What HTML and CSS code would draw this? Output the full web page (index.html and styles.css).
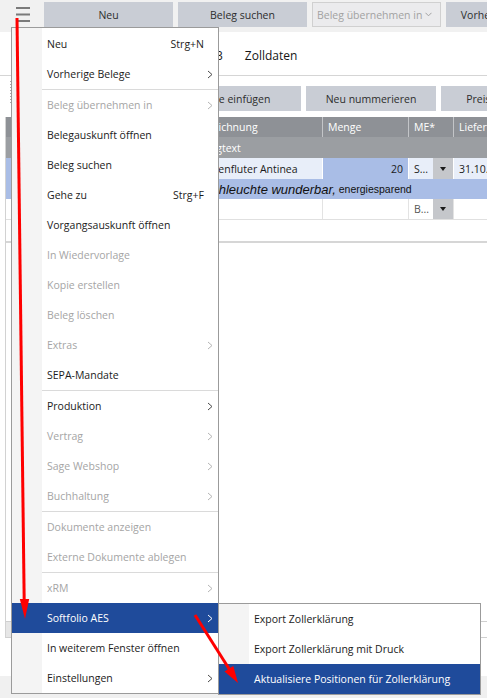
FILE: index.html
```html
<!DOCTYPE html>
<html lang="de">
<head>
  <meta charset="UTF-8" />
  <meta name="viewport" content="width=device-width, initial-scale=1.0"/>
  <title>Beleg – Zolldaten</title>
  <link rel="stylesheet" href="styles.css">
</head>
<body>
  <div class="toolbar">
    <div class="burger">
      <svg width="14" height="16" viewBox="0 0 14 16">
        <rect y="0" width="14" height="2"/>
        <rect y="6.5" width="14" height="2"/>
        <rect y="13" width="14" height="2"/>
      </svg>
    </div>
    <button class="tb-btn">Neu</button>
    <button class="tb-btn">Beleg suchen</button>
    <button class="tb-btn off">Beleg übernehmen in
      <svg width="7" height="5" viewBox="0 0 7 5"><path d="M0.5 0.8L3.5 3.8L6.5 0.8" fill="none" stroke="currentColor"/></svg>
    </button>
    <button class="tb-btn wide">Vorherige Belege</button>
  </div>

  <div class="tabs">
    <span>Belegkopf</span>
    <span>Positionen 3</span>
    <span>Zolldaten</span>
  </div>

  <div class="actions">
    <span class="grip"></span>
    <button class="act-btn">Artikel suchen</button>
    <button class="act-btn">Zeile einfügen</button>
    <button class="act-btn">Neu nummerieren</button>
    <button class="act-btn">Preise anpassen</button>
  </div>

  <div class="doc">
    <div class="row head">
      <div class="cell">Pos</div>
      <div class="cell">Artikel</div>
      <div class="cell">Bezeichnung</div>
      <div class="cell">Menge</div>
      <div class="cell">ME*</div>
      <div class="cell">Liefertermin</div>
    </div>
    <div class="row group">
      <div class="cell"></div>
      <div class="cell"></div>
      <div class="cell span">Belegtext</div>
    </div>
    <div class="row sel">
      <div class="cell mark">1</div>
      <div class="cell">4711</div>
      <div class="cell">Lichtenfluter Antinea</div>
      <div class="cell qty">20</div>
      <div class="cell">S...<span class="dd"></span></div>
      <div class="cell">31.10.2024</div>
    </div>
    <div class="row note">
      <div class="cell"></div>
      <div class="cell"></div>
      <div class="cell span"><em>Tischleuchte wunderbar,</em>&nbsp;energiesparend</div>
    </div>
    <div class="row blank">
      <div class="cell"></div>
      <div class="cell"></div>
      <div class="cell"></div>
      <div class="cell"></div>
      <div class="cell muted">B...<span class="dd"></span></div>
      <div class="cell"></div>
    </div>
    <div class="spacer"></div>
    <div class="pane"></div>
    <div class="hscroll"><span class="thumb"></span></div>
  </div>
  <div class="foot-space"></div>
  <div class="status"></div>

  <!-- Hauptmenü -->
  <div class="menu">
    <div class="item"><span class="label">Neu</span><span class="key">Strg+N</span><span class="sub"></span></div>
    <div class="item"><span class="label">Vorherige Belege</span><span class="sub"><svg width="6" height="9" viewBox="0 0 6 9"><path d="M1 1l4 3.5-4 3.5" fill="none" stroke="currentColor"/></svg></span></div>
    <div class="sep"></div>
    <div class="item off"><span class="label">Beleg übernehmen in</span><span class="sub"><svg width="6" height="9" viewBox="0 0 6 9"><path d="M1 1l4 3.5-4 3.5" fill="none" stroke="currentColor"/></svg></span></div>
    <div class="item"><span class="label">Belegauskunft öffnen</span><span class="sub"></span></div>
    <div class="item"><span class="label">Beleg suchen</span><span class="sub"></span></div>
    <div class="item"><span class="label">Gehe zu</span><span class="key">Strg+F</span><span class="sub"></span></div>
    <div class="item"><span class="label">Vorgangsauskunft öffnen</span><span class="sub"></span></div>
    <div class="item off"><span class="label">In Wiedervorlage</span><span class="sub"></span></div>
    <div class="item off"><span class="label">Kopie erstellen</span><span class="sub"></span></div>
    <div class="item off"><span class="label">Beleg löschen</span><span class="sub"></span></div>
    <div class="item off"><span class="label">Extras</span><span class="sub"><svg width="6" height="9" viewBox="0 0 6 9"><path d="M1 1l4 3.5-4 3.5" fill="none" stroke="currentColor"/></svg></span></div>
    <div class="item"><span class="label">SEPA-Mandate</span><span class="sub"></span></div>
    <div class="sep"></div>
    <div class="item"><span class="label">Produktion</span><span class="sub"><svg width="6" height="9" viewBox="0 0 6 9"><path d="M1 1l4 3.5-4 3.5" fill="none" stroke="currentColor"/></svg></span></div>
    <div class="item off"><span class="label">Vertrag</span><span class="sub"><svg width="6" height="9" viewBox="0 0 6 9"><path d="M1 1l4 3.5-4 3.5" fill="none" stroke="currentColor"/></svg></span></div>
    <div class="item off"><span class="label">Sage Webshop</span><span class="sub"><svg width="6" height="9" viewBox="0 0 6 9"><path d="M1 1l4 3.5-4 3.5" fill="none" stroke="currentColor"/></svg></span></div>
    <div class="item off"><span class="label">Buchhaltung</span><span class="sub"><svg width="6" height="9" viewBox="0 0 6 9"><path d="M1 1l4 3.5-4 3.5" fill="none" stroke="currentColor"/></svg></span></div>
    <div class="sep"></div>
    <div class="item off"><span class="label">Dokumente anzeigen</span><span class="sub"></span></div>
    <div class="item off"><span class="label">Externe Dokumente ablegen</span><span class="sub"></span></div>
    <div class="sep"></div>
    <div class="item off"><span class="label">xRM</span><span class="sub"><svg width="6" height="9" viewBox="0 0 6 9"><path d="M1 1l4 3.5-4 3.5" fill="none" stroke="currentColor"/></svg></span></div>
    <div class="item on"><span class="label">Softfolio AES</span><span class="sub"><svg width="6" height="9" viewBox="0 0 6 9"><path d="M1 1l4 3.5-4 3.5" fill="none" stroke="currentColor"/></svg></span></div>
    <div class="item"><span class="label">In weiterem Fenster öffnen</span><span class="sub"></span></div>
    <div class="item"><span class="label">Einstellungen</span><span class="sub"><svg width="6" height="9" viewBox="0 0 6 9"><path d="M1 1l4 3.5-4 3.5" fill="none" stroke="currentColor"/></svg></span></div>
  </div>

  <!-- Untermenü Softfolio AES -->
  <div class="submenu">
    <div class="item"><span class="label">Export Zollerklärung</span></div>
    <div class="item"><span class="label">Export Zollerklärung mit Druck</span></div>
    <div class="item on"><span class="label">Aktualisiere Positionen für Zollerklärung</span></div>
  </div>

  <!-- rote Hinweispfeile -->
  <svg class="marks" width="487" height="699" viewBox="0 0 487 699">
    <g fill="#ff0000" stroke="#ff0000" stroke-width="3">
      <line x1="17" y1="18" x2="24.2" y2="602"/>
      <polygon points="19.8,599 29.2,599 25,619" stroke="none"/>
      <line x1="195" y1="615" x2="229.5" y2="669.5"/>
      <polygon points="224.5,671.6 233.3,666 238,683" stroke="none"/>
    </g>
  </svg>
</body>
</html>
```

FILE: styles.css
```css
body {
  margin: 0;
  width: 487px;
  height: 699px;
  overflow: hidden;
  position: relative;
  font-family: "Open Sans", "Noto Sans", sans-serif;
  font-size: 10.5px;
  color: #1b1b1b;
  background: #fff;
}
button {
  font: inherit;
  border: 0;
  padding: 0;
  cursor: pointer;
}

/* Werkzeugleiste */
.toolbar {
  display: flex;
  gap: 5px;
  height: 32px;
  box-sizing: border-box;
  padding-top: 2px;
  background: #f1f1f1;
}
.burger {
  flex: none;
  width: 39px;
  box-sizing: border-box;
  padding: 5px 0 0 16px;
  fill: #7a7a7a;
}
.burger svg { display: block; }
.tb-btn {
  flex: none;
  width: 129px;
  height: 25px;
  background: #c9cdd5;
  color: #2d2d2d;
  white-space: nowrap;
}
.tb-btn.wide { width: 113px; }
.tb-btn.off {
  display: flex;
  align-items: center;
  justify-content: space-between;
  box-sizing: border-box;
  padding: 0 8px 0 4px;
  background: #ebebed;
  border: 1px solid #d0d0d0;
  color: #a2a2a2;
}

/* Reiter */
.tabs {
  display: flex;
  gap: 22px;
  align-items: center;
  height: 44px;
  box-sizing: border-box;
  padding: 4px 0 0 76px;
  border-bottom: 1px solid #d5d5d5;
  font-size: 12px;
  color: #151515;
  white-space: nowrap;
}

/* Positionsaktionen */
.actions {
  display: flex;
  gap: 5px;
  height: 25px;
  margin-top: 10px;
  padding-left: 10px;
}
.grip {
  flex: none;
  width: 2px;
  height: 23px;
  margin: -5px 19px 0 0;
  background: repeating-linear-gradient(#a8a8a8 0 1px, transparent 1px 3px);
}
.act-btn {
  flex: none;
  width: 130px;
  height: 25px;
  background: #c9cdd5;
  color: #2d2d2d;
  white-space: nowrap;
}

/* Positionsraster */
.doc {
  margin: 6px 0 0 5px;
  border-left: 1px solid #d2d2d2;
}
.row {
  display: grid;
  grid-template-columns: 60px 124px 133px 86px 45px 160px;
  height: 21px;
}
.cell {
  display: flex;
  align-items: center;
  padding: 0 5px;
  overflow: hidden;
  white-space: nowrap;
  border-right: 1px solid transparent;
}
.span { grid-column: 3 / -1; border-right: 0; }
.head {
  height: 20px;
  background: #8e9196;
  color: #fff;
}
.head .cell { border-right-color: #c3c5c8; }
.group {
  background: #9b9ea2;
  color: #fff;
}
.sel .cell {
  background: #e8eef9;
  border-right-color: #fff;
}
.sel .mark, .sel .qty { background: #a9bde6; }
.qty { justify-content: flex-end; }
.note {
  height: 20px;
  background: #a9bde6;
}
.note .span {
  font-family: "Liberation Sans", Arial, sans-serif;
  font-size: 10.5px;
  color: #111;
}
.note em { font-size: 13px; }
.blank {
  height: 20px;
  border-bottom: 1px solid #e0e0e0;
}
.blank .cell { border-right-color: #e3e3e3; }
.muted { color: #555; }
.dd {
  align-self: stretch;
  width: 20px;
  margin: 0 -5px 0 auto;
  display: flex;
  align-items: center;
  justify-content: center;
  background: #c5c7cb;
}
.dd::after {
  content: "";
  border: 3.5px solid transparent;
  border-top: 4px solid #1a1a1a;
  border-bottom: 0;
}
.spacer { height: 21px; }
.pane {
  height: 378px;
  border-top: 2px solid #d6d6d6;
}
.hscroll {
  display: flex;
  height: 15px;
  border-top: 1px solid #cfcfcf;
  border-bottom: 1px solid #cfcfcf;
}
.thumb {
  width: 220px;
  background: #e6e6e6;
}
.foot-space { height: 38px; }
.status {
  height: 22px;
  background: #f0f0f0;
}

/* Kontextmenü */
.menu, .submenu {
  position: absolute;
  border: 1px solid #9b9b9b;
  background: linear-gradient(to right, #f4f4f4 30px, #fff 30px);
}
.menu {
  left: 11px;
  top: 27px;
  width: 206px;
  padding-top: 1px;
}
.submenu {
  left: 218px;
  top: 603px;
  width: 261px;
}
.item {
  display: flex;
  align-items: center;
  height: 30px;
  padding: 0 2px 0 35px;
  white-space: nowrap;
}
.label { flex: 1; }
.sub {
  flex: none;
  width: 12px;
  display: flex;
  justify-content: center;
  color: #4a4a4a;
}
.sub svg { display: block; }
.sep {
  height: 1px;
  margin-left: 30px;
  background: #dadada;
}
.item.off { color: #a5a5a5; }
.item.off .sub { color: #b5b5b5; }
.item.on {
  background: #1f4b9b;
  color: #fff;
}
.item.on .sub { color: #fff; }

.marks {
  position: absolute;
  left: 0;
  top: 0;
  pointer-events: none;
}
```
